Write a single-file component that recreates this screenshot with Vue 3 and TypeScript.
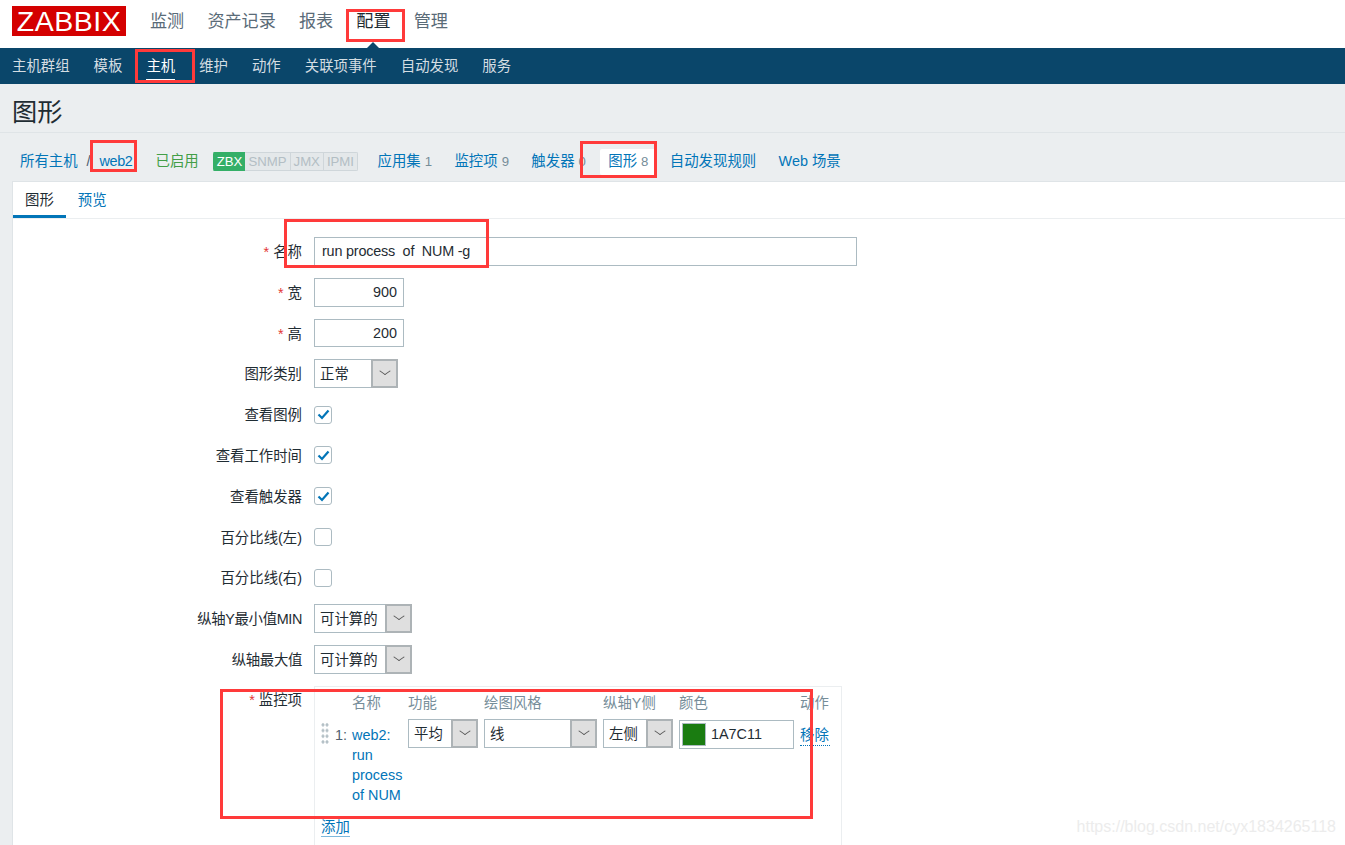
<script setup lang="ts">
const mainNav = ['监测', '资产记录', '报表', '配置', '管理']
const subNav = ['主机群组', '模板', '主机', '维护', '动作', '关联项事件', '自动发现', '服务']
const hostLinks = [
  { label: '应用集', count: '1' },
  { label: '监控项', count: '9' },
  { label: '触发器', count: '0' },
  { label: '图形', count: '8', active: true },
  { label: '自动发现规则' },
  { label: 'Web 场景' },
]
const statusTags = ['SNMP', 'JMX', 'IPMI']
const checks = [
  { label: '查看图例', on: true },
  { label: '查看工作时间', on: true },
  { label: '查看触发器', on: true },
  { label: '百分比线(左)', on: false },
  { label: '百分比线(右)', on: false },
]
const axisRows = ['纵轴Y最小值MIN', '纵轴最大值']
const columns = ['', '', '名称', '功能', '绘图风格', '纵轴Y侧', '颜色', '动作']
</script>

<template>
  <div class="page">
    <header class="top">
      <div class="logo">ZABBIX</div>
      <nav class="main-nav">
        <a v-for="item in mainNav" :key="item" :class="{ on: item === '配置' }">{{ item }}</a>
      </nav>
    </header>
    <nav class="sub-nav">
      <a v-for="item in subNav" :key="item" :class="{ on: item === '主机' }">{{ item }}</a>
    </nav>

    <h1 class="title">图形</h1>

    <div class="host-nav">
      <a class="link">所有主机</a>
      <span class="slash">/</span>
      <a class="link host-name">web2</a>
      <span class="enabled">已启用</span>
      <div class="status">
        <span class="tag zbx">ZBX</span>
        <span v-for="tag in statusTags" :key="tag" class="tag">{{ tag }}</span>
      </div>
      <div class="host-links">
        <span v-for="l in hostLinks" :key="l.label" class="host-link" :class="{ active: l.active }">
          <a class="link">{{ l.label }}</a><sup v-if="l.count" class="count">{{ l.count }}</sup>
        </span>
      </div>
    </div>

    <main class="panel">
      <div class="tabs">
        <span class="tab on">图形</span>
        <span class="tab link">预览</span>
      </div>

      <div class="form">
        <label class="label"><i>*</i> 名称</label>
        <input class="text wide" value="run process  of  NUM -g" readonly />

        <label class="label"><i>*</i> 宽</label>
        <input class="text num" value="900" readonly />

        <label class="label"><i>*</i> 高</label>
        <input class="text num" value="200" readonly />

        <label class="label">图形类别</label>
        <div class="select" style="width: 84px"><span>正常</span><b class="arrow" /></div>

        <template v-for="c in checks" :key="c.label">
          <label class="label">{{ c.label }}</label>
          <div class="check-cell">
            <span class="check">
              <svg v-if="c.on" width="13" height="11" viewBox="0 0 13 11">
                <path d="M1.5 5.5 5 9l6.5-7.5" fill="none" stroke="#0275b8" stroke-width="2.2" />
              </svg>
            </span>
          </div>
        </template>

        <template v-for="a in axisRows" :key="a">
          <label class="label tight">{{ a }}</label>
          <div class="select" style="width: 98px"><span>可计算的</span><b class="arrow" /></div>
        </template>

        <label class="label items-label"><i>*</i> 监控项</label>
        <div class="items">
          <div class="items-grid">
            <span v-for="(c, i) in columns" :key="i" class="head">{{ c }}</span>

            <span class="handle" />
            <span class="index">1:</span>
            <a class="link item-name">web2: run process of NUM</a>
            <div class="select" style="width: 70px"><span>平均</span><b class="arrow" /></div>
            <div class="select" style="width: 113px"><span>线</span><b class="arrow" /></div>
            <div class="select" style="width: 70px"><span>左侧</span><b class="arrow" /></div>
            <div class="color-box"><span class="swatch" /><span>1A7C11</span></div>
            <a class="link remove">移除</a>
          </div>
          <a class="link add">添加</a>
        </div>
      </div>
    </main>

    <div class="mark m1" />
    <div class="mark m2" />
    <div class="mark m3" />
    <div class="mark m4" />
    <div class="mark m5" />
    <div class="mark m6" />
    <div class="watermark">https://blog.csdn.net/cyx1834265118</div>
  </div>
</template>

<style>
html,
body {
  margin: 0;
  overflow: hidden;
}
</style>

<style scoped>
.page {
  position: relative;
  width: 1345px;
  height: 845px;
  overflow: hidden;
  background: #ebeef0;
  color: #1f2c33;
  font: 14.4px/17px "Liberation Sans", "Noto Sans CJK SC", sans-serif;
}
.link {
  color: #0275b8;
}

.top {
  display: flex;
  height: 48px;
  padding-left: 12px;
  background: #fff;
}
.logo {
  width: 114px;
  height: 30px;
  margin-top: 6px;
  background: #d40000;
  color: #fff;
  font-size: 28.5px;
  line-height: 31px;
  letter-spacing: 0.5px;
  text-align: center;
}
.main-nav {
  display: flex;
  gap: 23.2px;
  margin-left: 24px;
  padding-top: 11px;
  color: #5a6b78;
  font-size: 17.1px;
  line-height: 21px;
}
.main-nav .on {
  position: relative;
  color: #1f2c33;
}
.main-nav .on::after {
  content: "";
  position: absolute;
  left: 11px;
  top: 31px;
  border: 6px solid transparent;
  border-top: 0;
  border-bottom-color: #0a466a;
}

.sub-nav {
  display: flex;
  gap: 24px;
  height: 36px;
  padding-left: 12px;
  background: #0a466a;
  color: #d4dde2;
  line-height: 36px;
}
.sub-nav .on {
  height: 30.5px;
  border-bottom: 1.5px solid #fff;
  color: #fff;
}

.title {
  height: 49px;
  margin: 0;
  padding-left: 12px;
  box-sizing: border-box;
  border-bottom: 1px solid #dfe4e7;
  font-size: 25.2px;
  font-weight: 400;
  line-height: 56px;
}

.host-nav {
  display: flex;
  align-items: center;
  box-sizing: border-box;
  height: 48px;
  padding: 9px 0 0 20px;
  white-space: pre;
}
.slash {
  margin: 0 9px;
  color: #4f5f6f;
}
.host-name {
  width: 33px;
  letter-spacing: -0.4px;
}
.enabled {
  margin-left: 23px;
  color: #429e47;
}
.status {
  display: flex;
  height: 19px;
  margin-left: 14px;
  border-radius: 2px;
  overflow: hidden;
  font-size: 13.2px;
  line-height: 19px;
}
.tag {
  padding: 0 3px;
  border: solid #cfd6da;
  border-width: 1px 1px 1px 0;
  box-sizing: border-box;
  line-height: 17px;
  background: #e4e8ea;
  color: #b3bec4;
}
.tag.zbx {
  border-color: #34af67;
  background: #34af67;
  color: #fff;
  padding: 0 2px 0 4px;
}
.host-links {
  display: flex;
  margin-left: 11px;
}
.host-link {
  display: flex;
  align-items: center;
  height: 26px;
  padding: 0 8.5px;
  margin-right: 5.4px;
}
.host-link.active {
  margin-right: 4.4px;
  background: #fff;
  border-radius: 2px;
}
.count {
  margin-left: 4px;
  color: #768d99;
  font-size: 13.2px;
  line-height: 17px;
  vertical-align: baseline;
}

.panel {
  height: 664px;
  margin-left: 12px;
  background: #fff;
  border: solid #dfe4e7;
  border-width: 1px 0 0 1px;
}
.tabs {
  display: flex;
  height: 36px;
  border-bottom: 1px solid #ebeef0;
}
.tab {
  height: 36px;
  padding: 0 12px;
  box-sizing: border-box;
  line-height: 36px;
}
.tab.on {
  border-bottom: 3.6px solid #0275b8;
}

.form {
  display: grid;
  grid-template-columns: 289px auto;
  grid-auto-rows: 28.8px;
  gap: 12px;
  justify-items: start;
  padding-top: 18px;
}
.label {
  justify-self: end;
  line-height: 30px;
  white-space: nowrap;
}
.label.tight {
  letter-spacing: -0.35px;
}
.label i {
  color: #e33734;
  font-style: normal;
}
.text {
  box-sizing: border-box;
  height: 28.8px;
  padding: 0 6px;
  border: 1px solid #acbbc2;
  outline: 0;
  color: #1f2c33;
  font: inherit;
  white-space: pre;
}
.wide {
  width: 543px;
  padding-left: 7px;
  letter-spacing: -0.2px;
}
.num {
  width: 90px;
  text-align: right;
}
.select {
  display: flex;
  justify-content: space-between;
  box-sizing: border-box;
  height: 28.8px;
  padding-left: 5px;
  border: 1px solid #acbbc2;
  line-height: 29px;
  background: #fff;
}
.arrow {
  position: relative;
  flex: none;
  box-sizing: border-box;
  width: 27px;
  height: 28.8px;
  margin: -1px -1px 0 0;
  border: 2px solid #adb3b6;
  background: #dfdfdf;
}
.arrow::after {
  content: "";
  position: absolute;
  left: 7.5px;
  top: 6px;
  width: 7px;
  height: 7px;
  border: solid #555;
  border-width: 0 1px 1px 0;
  transform: scaleY(0.7) rotate(45deg);
}
.check-cell {
  display: flex;
  align-items: center;
  height: 28.8px;
}
.check {
  display: flex;
  align-items: center;
  justify-content: center;
  box-sizing: border-box;
  width: 18px;
  height: 18px;
  border: 1px solid #acbbc2;
  border-radius: 3px;
}

.items-label {
  line-height: 28px;
}
.items {
  box-sizing: border-box;
  width: 528px;
  height: 170px;
  padding: 6px 0 0 6px;
  border: 1px solid #ebeef0;
}
.items-grid {
  display: grid;
  grid-template-columns: 14px 17px 56px 76px 119px 76px 121px 30px;
  grid-template-rows: 21px auto;
  row-gap: 5px;
}
.head {
  color: #768d99;
  line-height: 21px;
  white-space: nowrap;
}
.handle {
  width: 8px;
  height: 23px;
  margin-top: 3px;
  background: radial-gradient(circle, #b4c0c6 1.4px, transparent 1.7px) 0 0 / 4px 5.7px;
}
.index {
  padding-top: 3px;
  line-height: 26px;
  color: #4f5f6f;
}
.item-name {
  width: 52px;
  line-height: 20px;
  padding-top: 6px;
}
.color-box {
  display: flex;
  align-items: center;
  gap: 5px;
  box-sizing: border-box;
  width: 115px;
  height: 28.8px;
  margin-top: 1px;
  padding-left: 2px;
  border: 1px solid #acbbc2;
  color: #1f2c33;
}
.swatch {
  box-sizing: border-box;
  width: 24px;
  height: 23px;
  border: 1px solid #acbbc2;
  background: #1a7c11;
}
.remove {
  height: 20px;
  margin-top: 6px;
  border-bottom: 1px dotted #0275b8;
  line-height: 20px;
}
.add {
  display: inline-block;
  margin-top: 14px;
  border-bottom: 1.5px solid #7db8dc;
  line-height: 17px;
}

.mark {
  position: absolute;
  box-sizing: border-box;
  border: 3px solid #ff3a3a;
}
.m1 { left: 346px; top: 9px; width: 59px; height: 33px; }
.m2 { left: 135px; top: 49px; width: 60px; height: 34px; }
.m3 { left: 90px; top: 140px; width: 47px; height: 32px; }
.m4 { left: 580px; top: 141px; width: 77px; height: 37px; }
.m5 { left: 284px; top: 219px; width: 205px; height: 49px; }
.m6 { left: 220px; top: 689px; width: 593px; height: 130px; }

.watermark {
  position: absolute;
  right: 9px;
  top: 818px;
  color: #ececec;
  font-size: 16px;
  line-height: 18px;
}
</style>
